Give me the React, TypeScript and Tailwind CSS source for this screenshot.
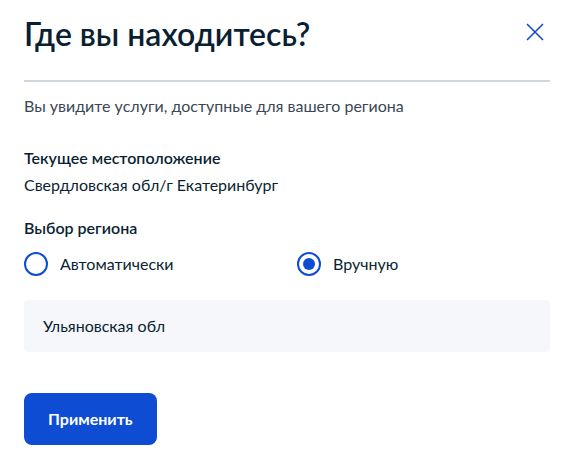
import { useState } from "react";

function CloseIcon() {
  return (
    <svg width="18" height="18" viewBox="0 0 18 18" fill="none">
      <path d="M1 1L17 17M17 1L1 17" stroke="#0d4cd3" strokeWidth="1.6" />
    </svg>
  );
}

function Radio({ label, checked, onClick }: { label: string; checked: boolean; onClick: () => void }) {
  return (
    <button onClick={onClick} className="flex items-center gap-3 cursor-pointer">
      <span className="w-6 h-6 rounded-full border-2 border-[#0d4cd3] flex items-center justify-center">
        {checked ? <span className="w-3 h-3 rounded-full bg-[#0d4cd3]" /> : null}
      </span>
      <span className="text-[16px] text-[#0b1f33]">{label}</span>
    </button>
  );
}

export default function App() {
  const [mode, setMode] = useState<"auto" | "manual">("manual");

  return (
    <div className="w-[574px] h-[464px] bg-white px-6 font-['Lato',sans-serif] text-[#0b1f33]">
      <div className="flex items-start justify-between pt-[12px] pb-[24px] border-b-2 border-[#d0d7e1]">
        <h1 className="text-[32px] leading-[44px] font-semibold">Где вы находитесь?</h1>
        <button className="mt-[11px] mr-[6px] cursor-pointer">
          <CloseIcon />
        </button>
      </div>

      <p className="mt-[12px] text-[16px] leading-6 text-[#3b4755]">Вы увидите услуги, доступные для вашего региона</p>

      <div className="mt-[28px]">
        <h2 className="text-[16px] leading-6 font-semibold">Текущее местоположение</h2>
        <p className="mt-[3px] text-[16px] leading-6">Свердловская обл/г Екатеринбург</p>
      </div>

      <div className="mt-[19px]">
        <h2 className="text-[16px] leading-6 font-semibold">Выбор региона</h2>
        <div className="mt-[12px] grid grid-cols-[273px_1fr]">
          <Radio label="Автоматически" checked={mode === "auto"} onClick={() => setMode("auto")} />
          <Radio label="Вручную" checked={mode === "manual"} onClick={() => setMode("manual")} />
        </div>
      </div>

      <div className="mt-[24px] h-[52px] rounded bg-[#f5f7fa] flex items-center px-[19px] text-[16px]">
        Ульяновская обл
      </div>

      <button className="mt-[41px] h-[52px] px-6 rounded-lg bg-[#0d4cd3] text-white text-[16px] font-bold cursor-pointer">
        Применить
      </button>
    </div>
  );
}
